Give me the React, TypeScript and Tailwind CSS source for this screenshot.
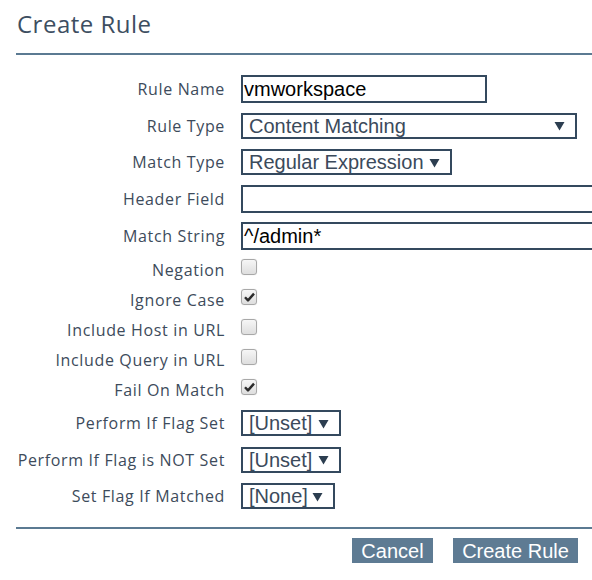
import React from 'react';

const labelCls =
  'w-[209px] shrink-0 whitespace-nowrap text-right text-[16px] tracking-[0.65px] text-[#3d4b5b] font-["Open_Sans",sans-serif]';

function Row({ label, h, children }: { label: string; h: string; children: React.ReactNode }) {
  return (
    <div className={`flex items-center gap-4 ${h}`}>
      <div className={labelCls}>{label}</div>
      {children}
    </div>
  );
}

function TextBox({ value, w }: { value?: string; w: string }) {
  return (
    <div
      className={`${w} h-[28px] shrink-0 border-2 border-[#34495e] bg-white pl-[1px] text-[20px] leading-[24px] text-black font-["Liberation_Sans",Arial,sans-serif]`}
    >
      {value}
    </div>
  );
}

function Select({ value, w }: { value: string; w: string }) {
  return (
    <div
      className={`${w} flex h-[26px] shrink-0 items-center justify-between border-2 border-[#34495e] bg-white pl-[6px] pr-[10px] text-[20px] text-[#3b4a5b] font-["Liberation_Sans",Arial,sans-serif]`}
    >
      <span className="leading-[22px]">{value}</span>
      <svg width="11" height="10" viewBox="0 0 11 10" className="mt-[1px]">
        <path d="M0.5 1 L10.5 1 L5.5 9.5 Z" fill="#2c3e50" />
      </svg>
    </div>
  );
}

function Check({ checked }: { checked?: boolean }) {
  return (
    <div className="-mt-[6px] flex h-[16px] w-[16px] items-center justify-center rounded-[3px] border border-[#a8a8a8] bg-gradient-to-b from-[#f6f6f6] to-[#dedede] shadow-[0_0_1px_rgba(0,0,0,0.2)]">
      {checked && (
        <svg width="11" height="10" viewBox="0 0 11 10">
          <path d="M1 5.2 L4 8.4 L10 1.6" stroke="#2b2b2b" strokeWidth="2.4" fill="none" strokeLinejoin="round" />
        </svg>
      )}
    </div>
  );
}

export default function App() {
  return (
    <div className="h-[580px] w-[592px] overflow-hidden bg-white">
      <div className="pl-4">
        <h1 className='pt-[7px] pl-[1px] text-[24px] tracking-[0.5px] leading-[34px] text-[#3d4e61] font-["Open_Sans",sans-serif]'>
          Create Rule
        </h1>
        <div className="mt-[12px] h-[2px] bg-[#5b7a92]" />
        <div className="pt-[15px]">
          <Row label="Rule Name" h="h-[37px]">
            <TextBox value="vmworkspace" w="w-[246px]" />
          </Row>
          <Row label="Rule Type" h="h-[37px]">
            <Select value="Content Matching" w="w-[336px]" />
          </Row>
          <Row label="Match Type" h="h-[36px]">
            <Select value="Regular Expression" w="w-[211px]" />
          </Row>
          <Row label="Header Field" h="h-[37px]">
            <TextBox w="w-[380px]" />
          </Row>
          <Row label="Match String" h="h-[38px]">
            <TextBox value="^/admin*" w="w-[380px]" />
          </Row>
          <Row label="Negation" h="h-[30px]">
            <Check />
          </Row>
          <Row label="Ignore Case" h="h-[30px]">
            <Check checked />
          </Row>
          <Row label="Include Host in URL" h="h-[30px]">
            <Check />
          </Row>
          <Row label="Include Query in URL" h="h-[30px]">
            <Check />
          </Row>
          <Row label="Fail On Match" h="h-[30px]">
            <Check checked />
          </Row>
          <Row label="Perform If Flag Set" h="h-[36px]">
            <Select value="[Unset]" w="w-[100px]" />
          </Row>
          <Row label="Perform If Flag is NOT Set" h="h-[37px]">
            <Select value="[Unset]" w="w-[100px]" />
          </Row>
          <Row label="Set Flag If Matched" h="h-[36px]">
            <Select value="[None]" w="w-[94px]" />
          </Row>
        </div>
        <div className="mt-[13px] h-[2px] bg-[#5b7a92]" />
        <div className='flex justify-end gap-[20px] pt-[9px] pr-[14px] text-[20px] text-white font-["Liberation_Sans",Arial,sans-serif]'>
          <button className="h-[25px] w-[81px] bg-[#5e7b93] leading-[24px]">Cancel</button>
          <button className="h-[25px] w-[125px] bg-[#5e7b93] leading-[24px]">Create Rule</button>
        </div>
      </div>
    </div>
  );
}
